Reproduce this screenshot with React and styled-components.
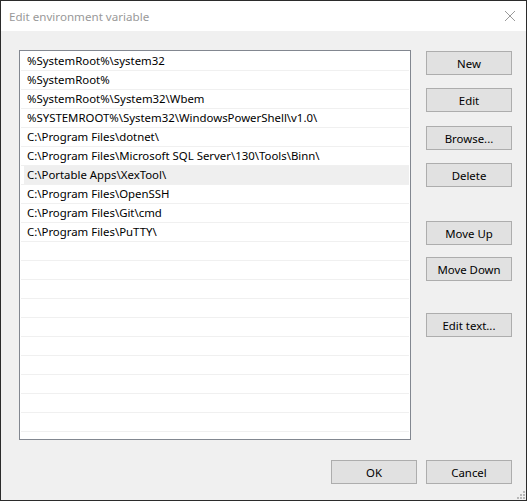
import styled, { createGlobalStyle } from "styled-components"

const GlobalStyle = createGlobalStyle`
    html, body {
        margin: 0;
        padding: 0;
        background: #f0f0f0;
    }
    body {
        font-family: "Noto Sans", "Liberation Sans", sans-serif;
        font-size: 11.4px;
        color: #000;
    }
`

const paths = [
    "%SystemRoot%\\system32",
    "%SystemRoot%",
    "%SystemRoot%\\System32\\Wbem",
    "%SYSTEMROOT%\\System32\\WindowsPowerShell\\v1.0\\",
    "C:\\Program Files\\dotnet\\",
    "C:\\Program Files\\Microsoft SQL Server\\130\\Tools\\Binn\\",
    "C:\\Portable Apps\\XexTool\\",
    "C:\\Program Files\\OpenSSH",
    "C:\\Program Files\\Git\\cmd",
    "C:\\Program Files\\PuTTY\\",
]

const TOTAL_ROWS = 20

const sideButtons = [
    { label: "New", gap: 0 },
    { label: "Edit", gap: 13 },
    { label: "Browse...", gap: 14 },
    { label: "Delete", gap: 13 },
    { label: "Move Up", gap: 34 },
    { label: "Move Down", gap: 12 },
    { label: "Edit text...", gap: 32 },
]

export default function App() {
    const rows = [...paths, ...Array(TOTAL_ROWS - paths.length).fill("")]

    return (
        <>
            <GlobalStyle />
            <Window>
                <TitleBar>
                    <Title>Edit environment variable</Title>
                    <CloseIcon width="12" height="12" viewBox="0 0 12 12">
                        <path d="M1 1 L11 11 M11 1 L1 11" stroke="#9a9a9a" strokeWidth="1" fill="none" />
                    </CloseIcon>
                </TitleBar>
                <Body>
                    <Main>
                        <ListBox>
                            {rows.map((text, i) => (
                                <Row key={i} $selected={i === 6}>{text}</Row>
                            ))}
                        </ListBox>
                        <SideColumn>
                            {sideButtons.map((b) => (
                                <Button key={b.label} $gap={b.gap}>{b.label}</Button>
                            ))}
                        </SideColumn>
                    </Main>
                    <Footer>
                        <Button>OK</Button>
                        <Button>Cancel</Button>
                    </Footer>
                    <Grip width="8" height="8" viewBox="0 0 8 8">
                        <rect x="6" y="0" width="2" height="2" fill="#b8b8b8" />
                        <rect x="3" y="3" width="2" height="2" fill="#b8b8b8" />
                        <rect x="6" y="3" width="2" height="2" fill="#b8b8b8" />
                        <rect x="0" y="6" width="2" height="2" fill="#b8b8b8" />
                        <rect x="3" y="6" width="2" height="2" fill="#b8b8b8" />
                        <rect x="6" y="6" width="2" height="2" fill="#b8b8b8" />
                    </Grip>
                </Body>
            </Window>
        </>
    )
}

const Window = styled.div`
    width: 527px;
    height: 501px;
    box-sizing: border-box;
    border: 1px solid #2b2b2b;
    display: flex;
    flex-direction: column;
    background: #f0f0f0;
`

const TitleBar = styled.div`
    height: 30px;
    background: #fff;
    display: flex;
    align-items: center;
    justify-content: space-between;
    padding: 0 10px 0 8px;
    flex-shrink: 0;
`

const Title = styled.span`
    color: #999;
    font-size: 11.6px;
`

const CloseIcon = styled.svg`
    display: block;
`

const Body = styled.div`
    flex: 1;
    position: relative;
    padding: 19px 0 0 18px;
`

const Main = styled.div`
    display: flex;
    gap: 15px;
`

const ListBox = styled.div`
    width: 392px;
    height: 390px;
    box-sizing: border-box;
    border: 1px solid #828790;
    background: #fff;
    padding-top: 1px;
    overflow: hidden;
`

const Row = styled.div`
    height: 18px;
    line-height: 18px;
    margin: 0 1px;
    padding-left: 6px;
    border-bottom: 1px solid #f0f0f0;
    white-space: nowrap;
    background: ${(p) => (p.$selected ? "linear-gradient(to right, transparent 3px, #efefef 3px)" : "transparent")};
`

const SideColumn = styled.div`
    display: flex;
    flex-direction: column;
    padding-top: 1px;
`

const Button = styled.div`
    width: 86px;
    height: 24px;
    box-sizing: border-box;
    border: 1px solid #adadad;
    background: #e1e1e1;
    display: flex;
    align-items: center;
    justify-content: center;
    margin-top: ${(p) => p.$gap || 0}px;
`

const Footer = styled.div`
    display: flex;
    justify-content: flex-end;
    gap: 9px;
    padding-right: 14px;
    margin-top: 20px;
`

const Grip = styled.svg`
    position: absolute;
    right: 1px;
    bottom: 1px;
`
